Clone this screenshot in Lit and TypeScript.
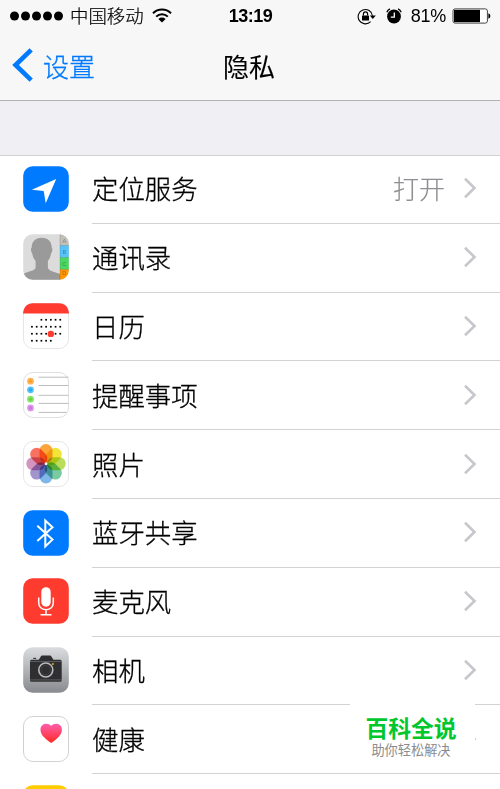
import { LitElement, css, html, svg } from "lit";
import { customElement, property } from "lit/decorators.js";

interface Row {
  icon: string;
  label: string;
  value?: string;
}

const ROWS: Row[] = [
  { icon: "location", label: "定位服务", value: "打开" },
  { icon: "contacts", label: "通讯录" },
  { icon: "calendar", label: "日历" },
  { icon: "reminders", label: "提醒事项" },
  { icon: "photos", label: "照片" },
  { icon: "bluetooth", label: "蓝牙共享" },
  { icon: "microphone", label: "麦克风" },
  { icon: "camera", label: "相机" },
  { icon: "health", label: "健康" },
  { icon: "motion", label: "" },
];

const PETALS = [
  "#fba53a",
  "#f3e43a",
  "#bbdd5c",
  "#79cba2",
  "#7fb8e8",
  "#a294cd",
  "#d394c0",
  "#f87262",
];

// first and last column of each calendar line
const CALENDAR_LINES = [
  [2, 6],
  [0, 6],
  [0, 6],
  [0, 4],
];

const REMINDERS = [
  { color: "#ff9c1f", y: 9.2, line: 5.2 },
  { color: "#1eadf8", y: 17.8, line: 13.5 },
  { color: "#63da38", y: 27.2, line: 23.3 },
  { color: "#cc73e1", y: 35.9, line: 31.4 },
];

const tile = (fill: string, stroke = "none") =>
  svg`<rect x="0.5" y="0.5" width="45" height="45" rx="9.5" fill=${fill} stroke=${stroke} />`;

const GLYPHS: Record<string, () => unknown> = {
  location: () => svg`
    <rect x="0.2" y="0.2" width="45.6" height="45.6" rx="9.5" fill="#007aff" />
    <path d="M33.2 13 8.8 23.8 20.7 25 22.7 37.2z" fill="#fff" />`,

  contacts: () => svg`
    <clipPath id="round"><rect x="0.2" y="0.2" width="45.6" height="45.6" rx="9.5" /></clipPath>
    <g clip-path="url(#round)">
      <rect width="46" height="46" fill="#dcdcdc" />
      <path d="M18.7 3.7c6.300 0 10 3.800 10 9.800 1 .6.8 4.200-.6 5.800-.6 3.600-1.600 5.700-3.200 7.700v6.700c1 3.800 7.400 4 12.100 6.300V46H1v-6.300c4.200-2.700 10.800-2.700 11.600-6V27c-1.600-2-2.900-4.200-3.400-7.700-1.400-1.600-1.600-5.200-.5-5.800 0-6 3.700-9.800 10-9.800z" fill="#9a9a9a" />
      <rect x="37" width="9" height="11.500" fill="#c2bfb9" />
      <rect x="37" y="11.500" width="9" height="12" fill="#57c3f8" />
      <rect x="37" y="23.500" width="9" height="12" fill="#4bd763" />
      <rect x="37" y="35.500" width="9" height="11" fill="#ff9500" />
      <path d="M37 0v46M37 11.500h9M37 23.500h9M37 35.500h9" stroke="#000" stroke-opacity=".2" stroke-width=".7" />
      <g class="tabs">
        <text x="41.300" y="9.300">A</text>
        <text x="41.300" y="19.500">B</text>
        <text x="41.300" y="31.500">C</text>
        <text x="41.300" y="41">D</text>
      </g>
    </g>`,

  calendar: () => svg`
    ${tile("#fff", "#e6e6e6")}
    <path d="M0 10.500C.8 3.500 4 .2 10 .2h26c6 0 9.200 3.300 10 10.300z" fill="#ff3b30" />
    ${CALENDAR_LINES.map(([from, to], line) =>
      Array.from({ length: to - from + 1 }, (_, i) => svg`
        <rect x=${8.1 + (from + i) * 4.72} y=${15.9 + line * 7} width="1.700" height="1.700" />`)
    )}
    <circle cx="27.800" cy="30.900" r="3.200" fill="#ff3b30" />`,

  reminders: () => svg`
    ${tile("#fff", "#dfdfdf")}
    ${REMINDERS.map((r) => svg`
      <circle cx="7.500" cy=${r.y} r="3.400" fill=${r.color} fill-opacity=".75" />
      <circle cx="7.500" cy=${r.y} r="1.600" fill=${r.color} />
      <path d="M15.500 ${r.line}h30" stroke="#b5b5b5" stroke-width=".9" />`)}
    <path d="M15.500 40.400h28" stroke="#b5b5b5" stroke-width=".9" />`,

  photos: () => svg`
    ${tile("#fff", "#e6e6e6")}
    <g class="petals">
      ${PETALS.map((color, i) => svg`
        <rect x="16.500" y="3" width="13" height="19" rx="6.500" fill=${color}
          transform="rotate(${i * 45} 23 22.700)" />`)}
    </g>
    <circle cx="23" cy="22.700" r="1.300" fill="#fff" />`,

  bluetooth: () => svg`
    <rect x="0.2" y="0.2" width="45.6" height="45.6" rx="9.500" fill="#007aff" />
    <path d="M14.300 15.800 29.500 29.500 22.300 36.500V10.500l7.200 6.800L14.300 31" fill="none" stroke="#fff" stroke-width="2" />`,

  microphone: () => svg`
    <rect x="0.2" y="0.2" width="45.6" height="45.6" rx="9.5" fill="#ff3b30" />
    <rect x="18.300" y="9.200" width="9.400" height="19.500" rx="4.700" fill="#fff" />
    <path d="M15.700 19.500v5c0 4.600 3 7.200 7.300 7.200s7.300-2.600 7.300-7.200v-5M23 31.700v4.700M17.500 36.700h11" fill="none" stroke="#fff" stroke-width="1.500" />`,

  camera: () => svg`
    <linearGradient id="steel" x2="0" y2="1">
      <stop stop-color="#dbdcde" /><stop offset="1" stop-color="#888a8f" />
    </linearGradient>
    <rect x="0.2" y="0.2" width="45.6" height="45.6" rx="9.5" fill="url(#steel)" />
    <path d="M7 14.200q0-1.500 1.500-1.500h7.300l2-3.200q.5-.9 1.600-.9h7.400q1.100 0 1.600.9l2 3.200h6.800q1.500 0 1.500 1.500v19q0 1.500-1.500 1.500H8.500Q7 34.700 7 33.200z" fill="#2f2f31" />
    <path d="M10.300 11.400h2.800" stroke="#2f2f31" stroke-width="1.100" />
    <path d="M7 14.500h31.700M7 32.900h31.700" stroke="#77787b" stroke-width=".6" />
    <circle cx="22.800" cy="23" r="7" fill="#2f2f31" stroke="#b9babd" stroke-width="1.600" />
    <circle cx="22.800" cy="23" r="4.700" fill="none" stroke="#454548" stroke-width=".7" />
    <circle cx="29.900" cy="17" r=".9" fill="#f5b921" />`,

  health: () => svg`
    <linearGradient id="pulse" x2="0" y2="1">
      <stop stop-color="#ff5fae" /><stop offset="1" stop-color="#ff2a22" />
    </linearGradient>
    ${tile("#fff", "#d2d2d2")}
    <path d="M28.200 27C21 22 17.500 18.300 17.500 13.700c0-3.600 2.400-6 5.400-6 2.400 0 4.300.9 5.300 2.300 1-1.400 2.900-2.300 5.300-2.300 3 0 5.400 2.400 5.400 6 0 4.600-3.500 8.300-10.700 13.300z" fill="url(#pulse)" />`,

  motion: () => svg`<rect x="0.2" y="0.2" width="45.6" height="45.6" rx="9.5" fill="#ffcc00" />`,
};

@customElement("app-icon")
export class AppIcon extends LitElement {
  static styles = css`
    :host,
    svg {
      display: block;
      width: 46px;
      height: 46px;
    }
    .tabs {
      font: 5.5px "Liberation Sans", sans-serif;
      text-anchor: middle;
      fill: rgba(0, 0, 0, 0.35);
      -webkit-text-stroke: 0;
    }
    .petals {
      isolation: isolate;
    }
    .petals rect {
      mix-blend-mode: multiply;
    }
  `;

  @property() name = "";

  render() {
    return html`<svg viewBox="0 0 46 46">${GLYPHS[this.name]?.()}</svg>`;
  }
}

@customElement("status-bar")
export class StatusBar extends LitElement {
  static styles = css`
    :host {
      display: grid;
      grid-template-columns: 1fr auto 1fr;
      align-items: center;
      height: 32px;
      padding: 0 9px 0 10px;
      color: #000;
      font-size: 18px;
    }
    .side {
      display: flex;
      align-items: center;
    }
    .right {
      justify-content: flex-end;
    }
    .signal {
      width: 53px;
      height: 10px;
    }
    .carrier {
      margin: -2px 8px 0 7px;
      font-size: 18.4px;
      -webkit-text-stroke: 0.2px;
    }
    .wifi {
      width: 20px;
      height: 15px;
      margin-bottom: 1px;
    }
    .time {
      font-family: "Liberation Sans", sans-serif;
      font-size: 18px;
      font-weight: 700;
      letter-spacing: -0.5px;
      -webkit-text-stroke: 0;
    }
    .lock {
      width: 19px;
      height: 17px;
    }
    .alarm {
      width: 16px;
      height: 16px;
      margin: 0 9px 0 10px;
    }
    .percent {
      margin-right: 6px;
      font-family: "Liberation Sans", sans-serif;
      font-size: 18px;
      letter-spacing: -0.3px;
      -webkit-text-stroke: 0;
    }
    .battery {
      width: 39px;
      height: 16px;
    }
  `;

  render() {
    return html`
      <div class="side">
        <svg class="signal" viewBox="0 0 53 10">
          ${[0, 1, 2, 3, 4].map((i) => svg`<circle cx=${4.5 + i * 11} cy="5" r="4.500" />`)}
        </svg>
        <span class="carrier">中国移动</span>
        <svg class="wifi" viewBox="0 0 20 15">
          <path d="M1 5.200a12.800 12.800 0 0 1 18 0M4.200 8.600a8.200 8.200 0 0 1 11.600 0" fill="none" stroke="#000" stroke-width="2" />
          <path d="M6.400 10.900a5.200 5.200 0 0 1 7.200 0L10 14.600z" />
        </svg>
      </div>
      <span class="time">13:19</span>
      <div class="side right">
        <svg class="lock" viewBox="0 0 19 17">
          <path d="M13.600 13.600A7.200 7.200 0 1 1 15.500 7.800" fill="none" stroke="#000" stroke-width="1.100" />
          <path d="M12.800 7.500h6l-3 3.400z" />
          <rect x="5" y="7.400" width="7" height="5" rx=".5" />
          <path d="M6.400 7.500V5.900a2.100 2.100 0 0 1 4.200 0v1.600" fill="none" stroke="#000" stroke-width="1.200" />
        </svg>
        <svg class="alarm" viewBox="0 0 16 16">
          <circle cx="8" cy="8.500" r="6.900" />
          <path d="M.8 4.200Q1.600 1.800 4 .9M15.200 4.200Q14.400 1.800 12 .9" fill="none" stroke="#000" stroke-width="1.200" />
          <path d="M8.300 4.500v4.600H4.800" fill="none" stroke="#fff" stroke-width="1.300" />
        </svg>
        <span class="percent">81%</span>
        <svg class="battery" viewBox="0 0 39 16">
          <rect x="1" y=".9" width="34.400" height="14.200" rx="2" fill="#fff" stroke="#444" stroke-width="1" />
          <rect x="2" y="1.900" width="26" height="12.200" />
          <path d="M36.400 5.300q2 .5 2 2.700t-2 2.700z" />
        </svg>
      </div>
    `;
  }
}

@customElement("settings-row")
export class SettingsRow extends LitElement {
  static styles = css`
    :host {
      display: flex;
      align-items: center;
      height: 68.8px;
      padding-left: 23px;
    }
    app-icon {
      margin-bottom: 1.6px;
    }
    .body {
      display: flex;
      flex: 1;
      align-items: center;
      box-sizing: border-box;
      height: 100%;
      margin-left: 23px;
      padding: 0 23px 1px 0;
      border-bottom: 1px solid #d3d2d6;
    }
    .label {
      flex: 1;
      font-size: 26.4px;
      line-height: 38px;
    }
    .value {
      margin-right: 18px;
      color: #8e8e93;
      font-size: 26px;
      line-height: 38px;
      -webkit-text-stroke: 0.15px;
    }
    .chevron {
      width: 14px;
      height: 22px;
    }
  `;

  @property() icon = "";
  @property() label = "";
  @property() value = "";

  render() {
    return html`
      <app-icon .name=${this.icon}></app-icon>
      <div class="body">
        <span class="label">${this.label}</span>
        ${this.value ? html`<span class="value">${this.value}</span>` : null}
        <svg class="chevron" viewBox="0 0 14 22">
          <path d="M2 1.800 11.500 11 2 20.200" fill="none" stroke="#c7c7cc" stroke-width="2.600" />
        </svg>
      </div>
    `;
  }
}

@customElement("app-root")
export class AppRoot extends LitElement {
  static styles = css`
    :host {
      position: relative;
      display: block;
      width: 500px;
      height: 789px;
      overflow: hidden;
      background: #efeff4;
      color: #000;
      font-family: "Noto Sans CJK SC", sans-serif;
      font-weight: 300;
      -webkit-text-stroke: 0.3px;
    }
    .top {
      box-sizing: border-box;
      height: 101px;
      border-bottom: 1px solid #b2b2b5;
      background: #f7f7f7;
    }
    .nav {
      display: grid;
      grid-template-columns: 1fr auto 1fr;
      align-items: center;
      height: 66px;
      padding: 0 14px 0 12px;
      font-size: 26px;
    }
    .back {
      display: flex;
      align-items: center;
      gap: 10px;
      color: #007aff;
    }
    .back svg {
      width: 21px;
      height: 34px;
    }
    .title {
      font-weight: 400;
      -webkit-text-stroke: 0.1px;
    }
    .list {
      margin-top: 54px;
      background: #fff;
      box-shadow: inset 0 1px #d0cfd4;
    }
    .badge {
      position: absolute;
      top: 699px;
      left: 350px;
      display: flex;
      flex-direction: column;
      align-items: center;
      box-sizing: border-box;
      width: 125px;
      height: 73px;
      padding: 13px 3px 0 0;
      background: #fff;
      -webkit-text-stroke: 0;
    }
    .badge-title {
      color: #00c72e;
      font-size: 22.8px;
      font-weight: 700;
      line-height: 32px;
    }
    .badge-text {
      color: #8c8c8c;
      font-size: 13.2px;
      font-weight: 400;
      line-height: 12px;
    }
  `;

  render() {
    return html`
      <div class="top">
        <status-bar></status-bar>
        <div class="nav">
          <div class="back">
            <svg viewBox="0 0 21 34">
              <path d="M19.200 1.800 3.500 17 19.200 32.200" fill="none" stroke="#007aff" stroke-width="4.600" />
            </svg>
            <span>设置</span>
          </div>
          <span class="title">隐私</span>
        </div>
      </div>
      <div class="list">
        ${ROWS.map(
          (row) => html`<settings-row
            .icon=${row.icon}
            .label=${row.label}
            .value=${row.value ?? ""}
          ></settings-row>`
        )}
      </div>
      <div class="badge">
        <span class="badge-title">百科全说</span>
        <span class="badge-text">助你轻松解决</span>
      </div>
    `;
  }
}
